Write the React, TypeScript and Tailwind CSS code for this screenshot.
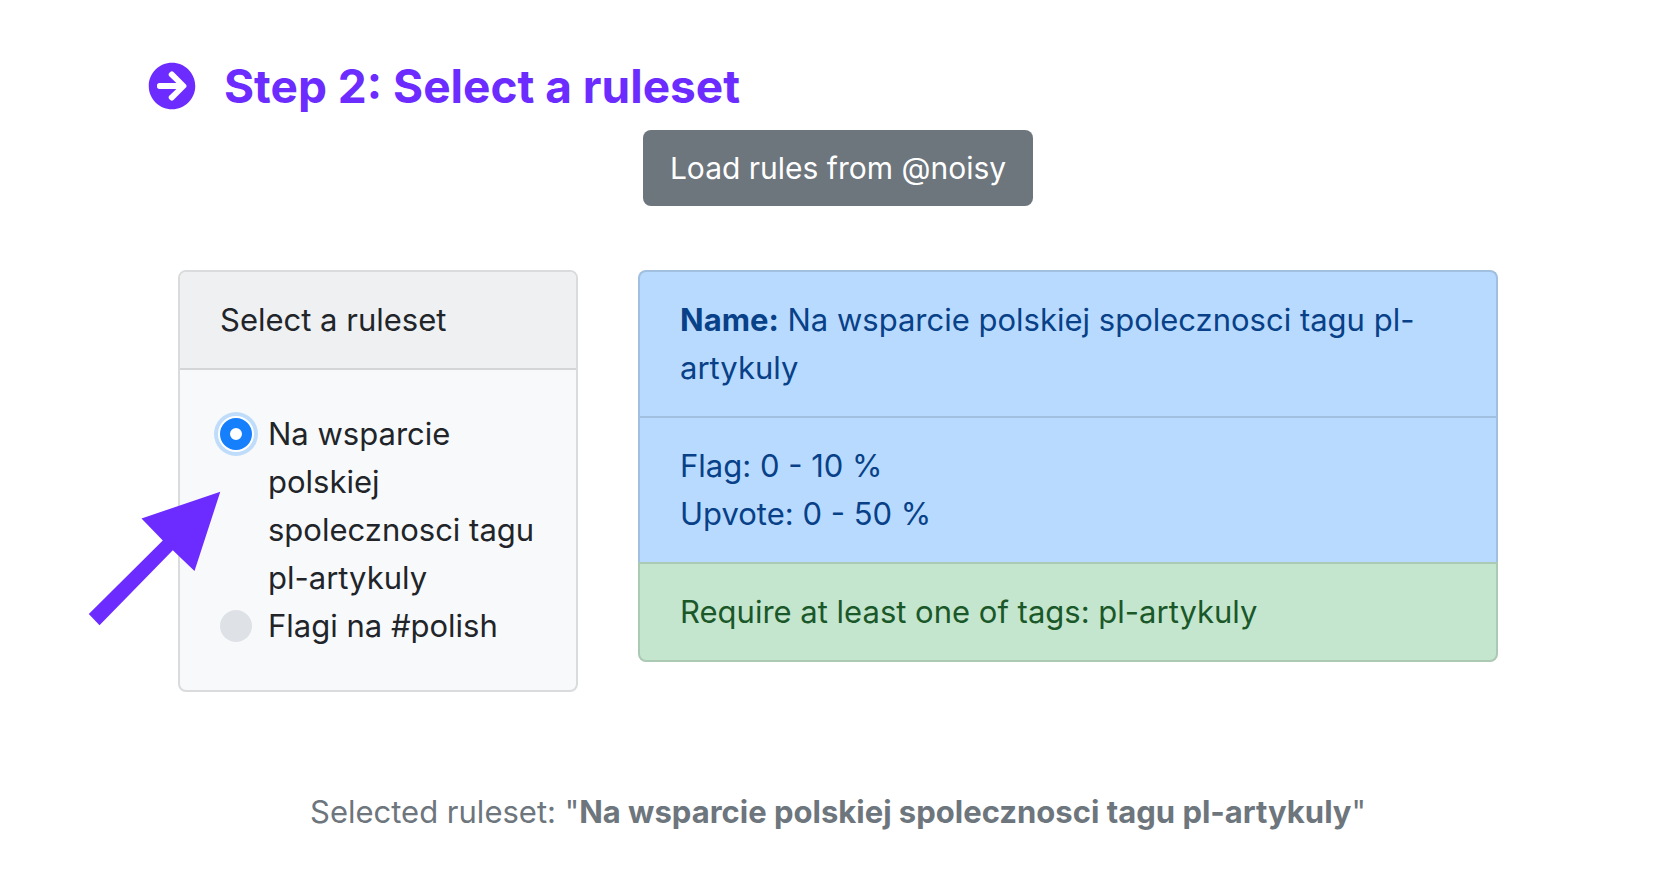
import { useState } from "react";

const rulesets = [
  "Na wsparcie polskiej spolecznosci tagu pl-artykuly",
  "Flagi na #polish",
];

function StepIcon() {
  return (
    <svg viewBox="0 0 512 512" className="size-12 shrink-0" fill="currentColor" aria-hidden="true">
      <path d="M256 8c137 0 248 111 248 248S393 504 256 504 8 393 8 256 119 8 256 8zm-28.9 143.6l75.5 72.4H120c-13.300 0-24 10.700-24 24v16c0 13.300 10.700 24 24 24h182.600l-75.500 72.400c-9.700 9.300-9.900 24.800-.4 34.300l11 10.900c9.400 9.400 24.600 9.400 33.900 0L404.300 273c9.400-9.400 9.400-24.600 0-33.900L271.600 106.300c-9.400-9.400-24.600-9.400-33.900 0l-11 10.900c-9.500 9.600-9.300 25.100.4 34.400z" />
    </svg>
  );
}

function PointerArrow() {
  return (
    <svg
      viewBox="0 0 134 136"
      className="pointer-events-none absolute -left-[92px] top-[218px] w-[134px]"
      fill="#6c2bff"
      aria-hidden="true"
    >
      <path d="M132.300 1.700 53.500 28.500 74.800 50.500.8 124 11.500 135.300 84.800 60.300 106.500 81Z" />
    </svg>
  );
}

export default function App() {
  const [selected, setSelected] = useState(0);

  return (
    <main className="mx-auto max-w-[1382px] pt-[62px] pr-0.5 pb-12 font-['Inter',sans-serif] text-[31px] leading-[48px] text-[#212529]">
      <div className="flex items-center gap-7 text-[#6c2bff]">
        <StepIcon />
        <h1 className="text-[46px] leading-[48px] font-bold">Step 2: Select a ruleset</h1>
      </div>

      <div className="mt-5 flex justify-center">
        <button
          type="button"
          className="rounded-lg bg-[#6d757d] px-[27px] py-[14px] text-[30px] text-white"
        >
          Load rules from @noisy
        </button>
      </div>

      <div className="mt-16 grid grid-cols-3 items-start gap-[60px] px-[30px]">
        <section className="relative rounded-lg border-2 border-[#d9dbdd] bg-[#f8f9fb]">
          <h2 className="rounded-t-md border-b-2 border-[#d4d5d7] bg-[#eff0f2] px-10 py-6">
            Select a ruleset
          </h2>
          <div className="p-10">
            {rulesets.map((name, i) => (
              <label key={name} className="flex items-start gap-4">
                <input
                  type="radio"
                  name="ruleset"
                  checked={selected === i}
                  onChange={() => setSelected(i)}
                  className="mt-2 size-8 shrink-0 appearance-none rounded-full bg-[#dee2e6] checked:border-[10px] checked:border-[#167ffc] checked:bg-white checked:shadow-[0_0_0_2px_#fff,0_0_0_6px_#bfddfb]"
                />
                <span>{name}</span>
              </label>
            ))}
          </div>
          <PointerArrow />
        </section>

        <ul className="col-span-2">
          <li className="rounded-t-lg border-2 border-b-0 border-[#a1bfdf] bg-[#b8daff] px-10 py-6 text-[#084187]">
            <strong className="font-bold">Name:</strong> {rulesets[0]}
          </li>
          <li className="border-2 border-b-0 border-[#a1bfdf] bg-[#b8daff] px-10 py-6 text-[#084187]">
            <p>Flag: 0 - 10 %</p>
            <p>Upvote: 0 - 50 %</p>
          </li>
          <li className="rounded-b-lg border-2 border-[#abc9b3] bg-[#c4e6ce] px-10 py-6 text-[#1b5829]">
            Require at least one of tags: pl-artykuly
          </li>
        </ul>
      </div>

      <p className="mt-24 text-center text-[#6d757d]">
        Selected ruleset: "<strong className="font-bold">{rulesets[selected]}</strong>"
      </p>
    </main>
  );
}
